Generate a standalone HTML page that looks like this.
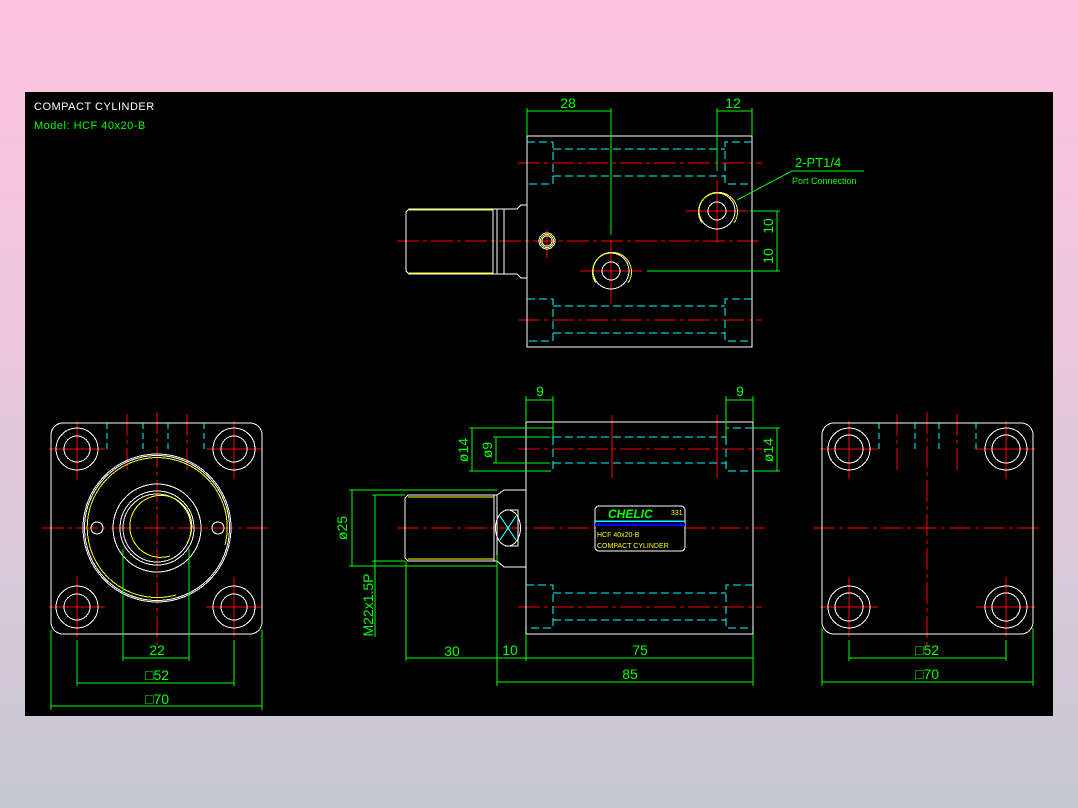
<!DOCTYPE html>
<html><head><meta charset="utf-8"><style>
html,body{margin:0;padding:0;width:1078px;height:808px;overflow:hidden;background:linear-gradient(#fcc3e0 0%,#f4c6df 30%,#d8c8da 70%,#c7c8d4 100%);}
svg{position:absolute;left:0;top:0}
text{font-family:"Liberation Sans",sans-serif}
</style></head><body>
<svg width="1078" height="808" viewBox="0 0 1078 808">
<rect x="25" y="92" width="1028" height="624" fill="#000"/>
<text x="34" y="110" fill="#fff" font-size="11" letter-spacing="0.5">COMPACT CYLINDER</text>
<text x="34" y="129" fill="#0f0" font-size="11" letter-spacing="0.5">Model: HCF 40x20-B</text>

<g fill="none" stroke-width="1" shape-rendering="crispEdges">
<!-- TOP VIEW -->
<g stroke="#f00" stroke-dasharray="22,4,4,4">
<line x1="518" y1="163" x2="762" y2="163"/><line x1="518" y1="320" x2="762" y2="320"/>
<line x1="397" y1="241" x2="760" y2="241"/>
</g>
<g stroke="#f00">
<line x1="611" y1="240" x2="611" y2="303"/><line x1="580" y1="271" x2="642" y2="271"/>
<line x1="717" y1="180" x2="717" y2="243"/><line x1="686" y1="211" x2="748" y2="211"/>
<line x1="547" y1="229" x2="547" y2="258"/>
</g>
<rect x="527" y="136" width="225" height="211" stroke="#fff"/>
<g stroke="#0ff" stroke-dasharray="8,4">
<path d="M527 142H553V184H527M553 149H725M553 176H725M752 142H725V184H752"/>
<path d="M527 299H553V341H527M553 306H725M553 333H725M752 299H725V341H752"/>
</g>
<g stroke="#fff">
<path d="M409 209H497V274H409L406 271V212Z"/>
<line x1="493" y1="209" x2="493" y2="274"/><line x1="504" y1="209" x2="504" y2="274"/>
<path d="M497 209H517L521 205H527M497 274H517L521 278H527"/>
<circle cx="611" cy="271" r="18"/><circle cx="611" cy="271" r="9"/>
<circle cx="717" cy="211" r="18"/><circle cx="717" cy="211" r="9"/>
<circle cx="547" cy="241" r="8"/><circle cx="547" cy="241" r="5"/>
</g>
<g stroke="#ff0">
<line x1="409" y1="210" x2="493" y2="210"/><line x1="409" y1="273" x2="493" y2="273"/>
<path d="M596 283A19.5 19.5 0 1 1 628 283"/>
<path d="M702 223A19.5 19.5 0 1 1 734 223"/>
<circle cx="547" cy="241" r="6.5"/>
</g>
<g stroke="#0f0">
<path d="M527 108V136M611 108V235M527 111H611"/>
<path d="M717 108V171M752 108V136M717 111H752"/>
<path d="M750 211H780M647 271H780M777 211V271"/>
<path d="M864 171H792L737 200"/>
</g>

<!-- FRONT VIEW -->
<g stroke="#f00" stroke-dasharray="22,4,4,4">
<line x1="518" y1="449" x2="762" y2="449"/><line x1="518" y1="607" x2="762" y2="607"/>
<line x1="397" y1="528" x2="595" y2="528"/><line x1="685" y1="528" x2="765" y2="528"/>
</g>
<g stroke="#f00"><line x1="612" y1="415" x2="612" y2="478"/><line x1="717" y1="415" x2="717" y2="478"/></g>
<rect x="526" y="422" width="227" height="212" stroke="#fff"/>
<g stroke="#0ff" stroke-dasharray="8,4">
<path d="M526 428H553V471H526M553 437H726M553 463H726M753 428H726V471H753"/>
<path d="M526 585H553V628H526M553 593H726M553 620H726M753 585H726V628H753"/>
</g>
<g stroke="#0ff"><path d="M500 516L516 540M516 516L500 540"/></g>
<g stroke="#fff">
<path d="M408 495H497V561H408L405 558V498Z"/>
<line x1="494" y1="495" x2="494" y2="561"/>
<path d="M497 495L504 490H526V567H504L497 561"/>
<ellipse cx="508" cy="528" rx="12.5" ry="18"/>
<path d="M505 510H518V546H505"/>
<rect x="595" y="506" width="90" height="45" rx="4"/>
</g>
<g stroke="#ff0"><line x1="408" y1="497" x2="494" y2="497"/><line x1="408" y1="559" x2="494" y2="559"/></g>
<line x1="595" y1="521" x2="685" y2="521" stroke="#0ff" stroke-width="1.5"/>
<line x1="595" y1="524.5" x2="685" y2="524.5" stroke="#00f" stroke-width="2.5"/>
<g stroke="#0f0">
<path d="M526 396V422M553 396V437M526 400H553"/>
<path d="M726 396V437M753 396V422M726 400H753"/>
<path d="M469 428H550M469 471H550M472 428V471"/>
<path d="M493 437H550M493 463H550M496 437V463"/>
<path d="M753 428H780M753 471H780M777 428V471"/>
<path d="M349 490H497M349 566H497M352 490V566"/>
<path d="M372 495H405M372 561H405M375 495V637"/>
<path d="M406 561V661M497 555V686M526 634V661M753 634V686"/>
<path d="M406 658H753M497 682H753"/>
</g>

<!-- LEFT VIEW -->
<g stroke="#f00" stroke-dasharray="22,4,4,4">
<line x1="42" y1="528" x2="272" y2="528"/><line x1="157" y1="412" x2="157" y2="645"/>
<line x1="127" y1="414" x2="127" y2="474"/><line x1="187" y1="414" x2="187" y2="474"/>
</g>
<g stroke="#f00">
<path d="M49 449H105M77 421V479M206 449H262M234 421V479M49 607H105M77 577V637M206 607H262M234 577V637"/>
</g>
<rect x="51" y="423" width="211" height="211" rx="12" stroke="#fff"/>
<g stroke="#fff">
<circle cx="77" cy="449" r="21"/><circle cx="77" cy="449" r="13"/>
<circle cx="234" cy="449" r="21"/><circle cx="234" cy="449" r="13"/>
<circle cx="77" cy="607" r="21"/><circle cx="77" cy="607" r="13"/>
<circle cx="234" cy="607" r="21"/><circle cx="234" cy="607" r="13"/>
<circle cx="157" cy="528" r="74"/><circle cx="157" cy="528" r="72.5"/>
<circle cx="157" cy="528" r="44"/><circle cx="157" cy="528" r="37"/><circle cx="157" cy="528" r="34"/>
<circle cx="97" cy="528" r="6"/><circle cx="218" cy="528" r="6"/>
</g>
<g stroke="#ff0">
<path d="M225 545A70 70 0 1 0 176 595"/>
<path d="M187 543A31 31 0 1 0 170 556"/>
</g>
<g stroke="#0ff" stroke-dasharray="6,4"><path d="M107 423V450M143 423V450M168 423V450M204 423V450"/></g>
<g stroke="#0f0">
<path d="M123 549V661M189 549V661M123 658H189"/>
<path d="M77 640V686M234 640V686M77 683H234"/>
<path d="M51 630V710M262 630V710M51 706H262"/>
</g>

<!-- RIGHT VIEW -->
<g stroke="#f00" stroke-dasharray="22,4,4,4">
<line x1="813" y1="528" x2="1043" y2="528"/><line x1="927" y1="412" x2="927" y2="645"/>
<line x1="897" y1="414" x2="897" y2="474"/><line x1="957" y1="414" x2="957" y2="474"/>
</g>
<g stroke="#f00">
<path d="M820 449H878M849 421V479M976 449H1035M1006 421V479M820 607H878M849 577V637M976 607H1035M1006 577V637"/>
</g>
<rect x="822" y="423" width="211" height="211" rx="12" stroke="#fff"/>
<g stroke="#fff">
<circle cx="849" cy="449" r="21"/><circle cx="849" cy="449" r="14"/>
<circle cx="1006" cy="449" r="21"/><circle cx="1006" cy="449" r="14"/>
<circle cx="849" cy="607" r="21"/><circle cx="849" cy="607" r="14"/>
<circle cx="1006" cy="607" r="21"/><circle cx="1006" cy="607" r="14"/>
</g>
<g stroke="#0ff" stroke-dasharray="6,4"><path d="M879 423V450M915 423V450M939 423V450M976 423V450"/></g>
<g stroke="#0f0">
<path d="M849 640V661M1006 640V661M849 658H1006"/>
<path d="M822 628V686M1033 628V686M822 682H1033"/>
</g>
</g>

<!-- texts -->
<g fill="#0f0" font-size="14" text-anchor="middle">
<text x="568" y="108">28</text><text x="733" y="108">12</text>
<text x="540" y="396">9</text><text x="740" y="396">9</text>
<text x="452" y="656">30</text><text x="510" y="655">10</text><text x="640" y="655">75</text>
<text x="630" y="679">85</text>
<text x="157" y="655">22</text>
<text x="157" y="680">□52</text><text x="157" y="704">□70</text>
<text x="927" y="655">□52</text><text x="927" y="679">□70</text>
<text transform="translate(773,226) rotate(-90)">10</text>
<text transform="translate(773,256) rotate(-90)">10</text>
<text transform="translate(468,450) rotate(-90)">ø14</text>
<text transform="translate(492,450) rotate(-90)">ø9</text>
<text transform="translate(773,450) rotate(-90)">ø14</text>
<text transform="translate(347,528) rotate(-90)">ø25</text>
<text transform="translate(373,605) rotate(-90)">M22x1.5P</text>
</g>
<text x="795" y="167" fill="#0f0" font-size="13">2-PT1/4</text>
<text x="792" y="184" fill="#0f0" font-size="9">Port Connection</text>
<text x="608" y="518" fill="#0f0" font-size="12" font-weight="bold" font-style="italic">CHELIC</text>
<text x="671" y="515" fill="#ff0" font-size="7">331</text>
<text x="597" y="537" fill="#ff0" font-size="7">HCF 40x20-B</text>
<text x="597" y="548" fill="#ff0" font-size="7">COMPACT CYLINDER</text>
</svg>
</body></html>
